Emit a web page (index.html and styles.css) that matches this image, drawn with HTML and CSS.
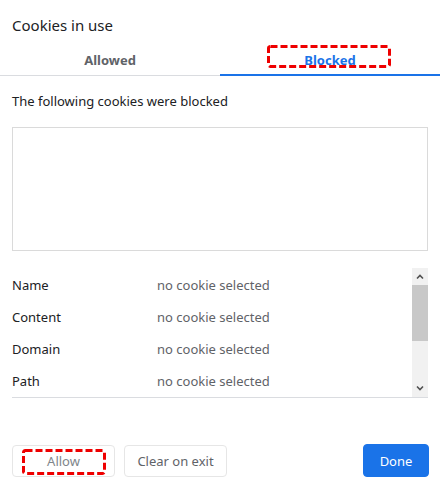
FILE: index.html
```html
<!DOCTYPE html>
<html>
<head>
<meta charset="utf-8">
<link rel="stylesheet" href="styles.css">
</head>
<body>
<div class="dialog">
  <h1 class="title">Cookies in use</h1>
  <div class="tabs">
    <div class="tab">Allowed</div>
    <div class="tab active">Blocked</div>
  </div>
  <div class="content">
    <p class="subtitle">The following cookies were blocked</p>
    <div class="tree"></div>
    <div class="details">
      <div class="rows">
        <div class="row"><span class="label">Name</span><span class="value">no cookie selected</span></div>
        <div class="row"><span class="label">Content</span><span class="value">no cookie selected</span></div>
        <div class="row"><span class="label">Domain</span><span class="value">no cookie selected</span></div>
        <div class="row"><span class="label">Path</span><span class="value">no cookie selected</span></div>
      </div>
      <div class="scrollbar">
        <svg class="arrow" width="16" height="17" viewBox="0 0 16 17"><path d="M5 10.5 L8 7.5 L11 10.5" fill="none" stroke="#505050" stroke-width="1.6"/></svg>
        <div class="track"><div class="thumb"></div></div>
        <svg class="arrow" width="16" height="17" viewBox="0 0 16 17"><path d="M5 6.5 L8 9.5 L11 6.5" fill="none" stroke="#505050" stroke-width="1.6"/></svg>
      </div>
    </div>
  </div>
  <div class="buttons">
    <button class="btn">Allow</button>
    <button class="btn">Clear on exit</button>
    <span class="spacer"></span>
    <button class="btn primary">Done</button>
  </div>
  <svg class="mark mark-blocked" width="124" height="23" viewBox="0 0 124 23"><rect x="1.5" y="1.5" width="121" height="20" rx="2" fill="none" stroke="#ee0000" stroke-width="3" stroke-dasharray="7 3"/></svg>
  <svg class="mark mark-allow" width="84" height="26" viewBox="0 0 84 26"><rect x="1.5" y="1.5" width="81" height="23" rx="2" fill="none" stroke="#ee0000" stroke-width="3" stroke-dasharray="7 3"/></svg>
</div>
</body>
</html>
```
FILE: styles.css
```css
* { box-sizing: border-box; }
html, body { margin: 0; padding: 0; background: #fff; }
body {
  font-family: "Noto Sans", "Open Sans", Arial, sans-serif;
  font-size: 13px;
  color: #202124;
}
.dialog {
  position: relative;
  width: 440px;
  height: 492px;
}
.title {
  margin: 0;
  padding: 15px 12px 0;
  font-size: 15px;
  font-weight: 400;
  line-height: 20px;
  color: #202124;
}
.tabs {
  display: flex;
}
.tab {
  flex: 1;
  text-align: center;
  padding: 15px 0 5px;
  line-height: 20px;
  font-weight: 700;
  color: #5f6368;
  border-bottom: 1px solid #dadce0;
}
.tab.active {
  color: #1a73e8;
  padding-bottom: 4px;
  border-bottom: 2px solid #1a73e8;
}
.content {
  padding: 0 12px;
}
.subtitle {
  margin: 15px 0 0;
  line-height: 20px;
  color: #202124;
}
.tree {
  margin-top: 16px;
  height: 124px;
  border: 1px solid #dadada;
}
.details {
  margin-top: 17px;
  display: flex;
  height: 130px;
  border-bottom: 1px solid #dadce0;
}
.rows {
  flex: 1;
  padding-top: 1px;
}
.row {
  display: flex;
  height: 32px;
  line-height: 32px;
}
.label {
  width: 145px;
  color: #202124;
}
.value {
  color: #5f6368;
}
.scrollbar {
  width: 16px;
  background: #f1f1f1;
  display: flex;
  flex-direction: column;
}
.arrow { display: block; flex: none; }
.track { flex: 1; }
.thumb {
  height: 56px;
  background: #c8c8c8;
}
.buttons {
  display: flex;
  gap: 9px;
  padding: 0 11px 0 12px;
  margin-top: 47px;
}
.spacer { flex: 1; }
.btn {
  height: 32px;
  width: 103px;
  border: 1px solid #e6e6e6;
  border-radius: 4px;
  background: #fff;
  font-family: inherit;
  font-size: 13px;
  color: #5f6368;
  padding: 0;
}
.btn:first-child { color: #80868b; }
.btn.primary {
  width: 66px;
  height: 33px;
  margin-top: -1px;
  background: #1a73e8;
  border-color: #1a73e8;
  color: #fff;
}
.mark {
  position: absolute;
  display: block;
}
.mark-blocked { left: 267px; top: 45px; }
.mark-allow { left: 22px; top: 449px; }
```
